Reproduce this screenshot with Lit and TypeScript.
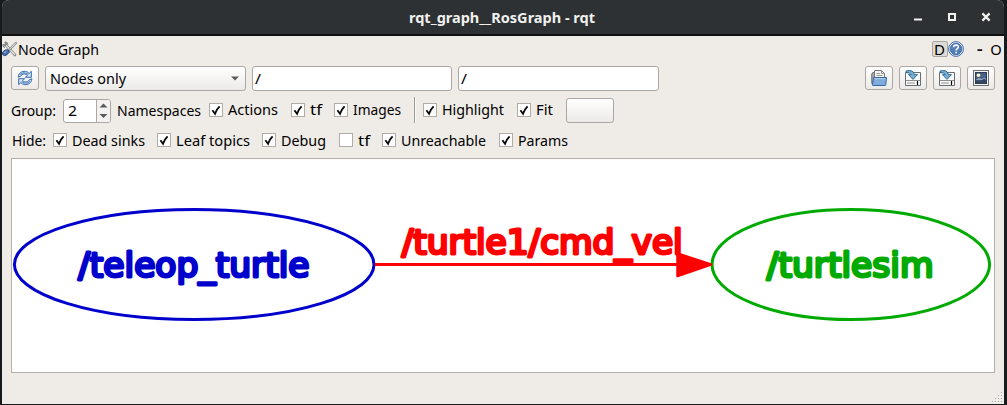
import { LitElement, html, svg, css } from "lit";
import { customElement, property } from "lit/decorators.js";

@customElement("ui-label")
class UiLabel extends LitElement {
  @property() text = "";
  @property({ type: Number }) width = 50;
  @property({ type: Number }) base = 15;
  static styles = css`
    :host { display: block; flex: none; height: 20px; }
    svg { display: block; overflow: visible; }
    text { font-family: "Noto Sans", "Open Sans", sans-serif; font-size: 14.5px; fill: #000; }
    :host([strong]) text { font-weight: 700; font-size: 14px; fill: #f0f0ee; }
  `;
  render() {
    return html`<svg width=${this.width} height="20"><text x="0" y=${this.base} textLength=${this.width} lengthAdjust="spacingAndGlyphs">${this.text}</text></svg>`;
  }
}

@customElement("ui-check")
class UiCheck extends LitElement {
  @property() text = "";
  @property({ type: Number }) width = 50;
  @property({ type: Number }) base = 15.1;
  @property({ type: Boolean }) on = false;
  static styles = css`
    :host { display: flex; flex: none; align-items: center; gap: 5px; height: 20px; }
    .box { box-sizing: border-box; width: 14px; height: 14px; border: 1px solid #b1aca6; background: #fff; }
    svg { display: block; }
  `;
  render() {
    return html`<div class="box">${this.on
        ? html`<svg width="12" height="12"><path d="M2.4 6.2 5 9.7Q6.4 5.5 9.6 2.4" fill="none" stroke="#0a0a0a" stroke-width="1.9"/></svg>`
        : null}</div><ui-label .text=${this.text} .width=${this.width} .base=${this.base}></ui-label>`;
  }
}

const refresh = svg`
  <g fill="#d5e5f7" stroke="#3567a5" stroke-width="1" stroke-linejoin="round">
    <path d="M1.2 7.2C1.4 3 5 .9 8.3 1.4 10 1.6 11.3 2.4 12.2 3.4L14.3 1.3V7.3H8.4L10.4 5.3C8.3 3.3 5 3.7 4 6Z"/>
    <path d="M14.8 8.8C14.6 13 11 15.1 7.7 14.6 6 14.4 4.7 13.6 3.8 12.6L1.7 14.7V8.7H7.6L5.6 10.7C7.7 12.7 11 12.3 12 10Z"/>
  </g>
  <path d="M2.8 4.7Q6.5 1 11.4 4.5M13.2 11.3Q9.5 15 4.6 11.5" fill="none" stroke="#5f91c9" stroke-width="1.2"/>`;

const open = svg`
  <path d="M.8 13.5V3.7L2 2.5H5V13.5Z" fill="#aaa" stroke="#666"/>
  <path d="M3.5 9V1Q3.5.5 4 .5H10.5L13.5 3.5V9Z" fill="#f4f4f3" stroke="#777"/>
  <path d="M10.5.5V3.5H13.5M5.5 3.5H9M5.5 5.5H11.5" fill="none" stroke="#999"/>
  <path d="M2.8 7.5H15.2Q15.6 7.5 15.5 8L14.8 14.7Q14.7 15.5 14 15.5H2Q1.2 15.5 1.4 14.7Z" fill="#7facdc" stroke="#3567a5"/>
  <path d="M3.5 8.7H14.2" stroke="#b7d2ef"/>`;

const save = svg`
  <path d="M.5 2.5H15.5V15.5H.5Z" fill="#fafafa" stroke="#666e70"/>
  <path d="M1 10.5H15" stroke="#8a8e8c"/>
  <path d="M2 13H10" stroke="#c3c5c2" stroke-width="2"/>
  <path d="M12.5 11V15" stroke="#000" stroke-width="1.2"/>
  <path d="M1.1.9Q8.4-.8 9.4 4.6H12.5L8 9.4 3.5 4.6H6.1Q5.5 2.4 1.1 2.6Z" fill="#77adcf" stroke="#28658e" stroke-width=".9"/>`;

const image = svg`
  <rect x=".5" y=".5" width="15" height="15" fill="#f4f4f2" stroke="#6a6e70"/>
  <rect x="2.5" y="2.5" width="11" height="11" fill="#466088" stroke="#303c50"/>
  <path d="M3 9.7 6 8 9 9 11.2 7.4 13 9V10H3Z" fill="#90a4bb"/>
  <path d="M3 10.5H9L11 8.5 13 10V13H3Z" fill="#33455f"/>
  <circle cx="5.5" cy="5.3" r="1.8" fill="#fcf7bb"/>`;

const tools = svg`
  <path d="M3.6 3.6 13 14" stroke="#858a88" stroke-width="2.7" stroke-linecap="round"/>
  <path d="M3.8 3.9 12.8 13.8" stroke="#e7e8e6" stroke-width="1.3"/>
  <path d="M2.8 1.1 4.3 3.1 3.3 4.5 1 3.6Q.6 5.8 3 6.4M2.8 1.1Q5.4.8 5.7 3.8" fill="none" stroke="#80847f" stroke-width="1.1"/>
  <path d="M6 9.5 12.2 2.5 14.2 1.2 14.7 1.8 13.5 3.8 7 10" fill="#e5e6e4" stroke="#858985" stroke-width="1"/>
  <path d="M5.4 8.7Q7.5 9.4 7.3 11.2L4.7 13.9Q2.3 15.4.8 13.7-.3 11.8 1.6 10.2 3.5 8.5 5.4 8.7Z" fill="#4b72ad" stroke="#213f70"/>
  <path d="M2.2 11.7 4.4 10.3" stroke="#a7c0e4"/>`;

const icon = (art: unknown) => html`<svg class="icon" width="16" height="16" viewBox="0 0 16 16">${art}</svg>`;

@customElement("app-root")
class AppRoot extends LitElement {
  static styles = css`
    :host { display: block; box-sizing: border-box; width: 1007px; height: 405px; background: #171b1e; padding: 0 3px 1px 2px; }
    .window { display: flex; flex-direction: column; height: 404px; background: #efebe7; border-radius: 7px 7px 0 0; overflow: hidden; }
    .title { box-sizing: border-box; flex: none; height: 36px; background: #2d3134; border-bottom: 2px solid #0e1011; display: grid; grid-template-columns: 407px 187px 1fr; align-items: center; }
    .controls { justify-self: end; padding-right: 1px; }
    .row { display: flex; align-items: center; flex: none; }
    .header { height: 26px; }
    .grow { flex: 1; }
    .dock { box-sizing: border-box; width: 16px; height: 16px; border: 1px solid #aaa6a1; border-radius: 2px; background: #dedad6; padding-left: 1px; display: flex; align-items: center; }
    .tool { height: 25px; margin-top: 4px; padding: 0 9px; align-items: flex-start; }
    .btn { box-sizing: border-box; width: 28px; height: 24px; border: 1px solid #aca7a2; border-radius: 3px; background: linear-gradient(#fff, #eceae8); display: flex; align-items: center; justify-content: center; flex: none; }
    .btn.blank { width: 48px; height: 25px; }
    .combo { box-sizing: border-box; width: 201px; height: 25px; border: 1px solid #aca7a2; border-radius: 3px; margin-left: 6px; padding: 0 6px 0 4px; background: linear-gradient(#fff, #eceae8); display: flex; align-items: center; justify-content: space-between; }
    .field { box-sizing: border-box; width: 200px; height: 25px; border: 1px solid #aca7a2; border-radius: 3px; margin-left: 6px; padding-left: 2px; background: #fff; display: flex; align-items: center; }
    .field.wide { width: 201px; }
    .right { display: flex; gap: 6px; margin-left: auto; }
    .options { height: 26px; margin-top: 6px; padding-left: 9px; }
    .spin { box-sizing: border-box; width: 48px; height: 24px; margin: 1px 6px 0 7px; border: 1px solid #aca7a2; border-radius: 3px; background: #fff; display: flex; align-items: center; overflow: hidden; padding-left: 4px; justify-content: space-between; }
    .steps { width: 13px; height: 22px; border-left: 1px solid #aca7a2; background: #f4f2f0; }
    .sep { width: 1px; height: 26px; background: #9d9994; border-right: 1px solid #f9f8f6; margin: 0 7px 0 13px; }
    .hide { height: 20px; margin-top: 7px; padding-left: 10px; }
    .g7 { margin-left: 7px; } .g8 { margin-left: 8px; } .g12 { margin-left: 12px; } .g13 { margin-left: 13px; }
    .canvas { box-sizing: border-box; width: 984px; height: 215px; flex: none; margin: 8px 0 0 9px; border: 1px solid #b4afaa; background: #fff; }
    .canvas svg { display: block; }
    .node { font-family: "DejaVu Sans", sans-serif; font-size: 34.5px; stroke-width: 3; stroke-linejoin: round; }
    .foot { flex: 1; display: flex; justify-content: flex-end; align-items: flex-end; }
    svg { display: block; flex: none; }
  `;
  check(text: string, width: number, gap: string, on = true, base = 15.1) {
    return html`<ui-check class=${gap} .text=${text} .width=${width} .on=${on} .base=${base}></ui-check>`;
  }
  render() {
    return html`<div class="window">
      <div class="title">
        <span></span>
        <ui-label strong .text=${"rqt_graph__RosGraph - rqt"} .width=${186} .base=${15.5}></ui-label>
        <svg class="controls" width="92" height="20" fill="none" stroke="#f2f2f0">
          <path d="M3 12.5H11" stroke-width="2"/>
          <rect x="38" y="7" width="6" height="6" stroke-width="2"/>
          <path d="M71.4 6.4 78.6 13.6M78.6 6.4 71.4 13.6" stroke-width="2.2"/>
        </svg>
      </div>
      <div class="row header">
        ${icon(tools)}<ui-label .text=${"Node Graph"} .width=${81} .base=${15.8}></ui-label>
        <span class="grow"></span>
        <div class="dock"><ui-label .text=${"D"} .width=${11} .base=${15.5}></ui-label></div>
        <svg width="16" height="16" viewBox="0 0 16 16">
          <circle cx="8" cy="8" r="7.4" fill="#fff" stroke="#3e68a4"/>
          <circle cx="8" cy="8" r="5.9" fill="#527eb8" stroke="#315b98" stroke-width=".7"/>
          <path d="M5.6 6.3Q5.6 4.1 8 4.1T10.3 6.1Q10.3 7.2 9 8 8.1 8.5 8.1 9.6M8.1 10.7V12.2" fill="none" stroke="#fff" stroke-width="1.6"/>
        </svg>
        <svg width="40" height="20"><path d="M13.5 11.2H18.2" stroke="#111" stroke-width="1.8"/>
          <text x="26.2" y="15.8" font-family="Noto Sans, sans-serif" font-size="14.5" textLength="11.5" lengthAdjust="spacingAndGlyphs">O</text></svg>
      </div>
      <div class="row tool">
        <div class="btn">${icon(refresh)}</div>
        <div class="combo"><ui-label .text=${"Nodes only"} .width=${76} .base=${15.4}></ui-label>
          <svg width="8" height="5"><path d="M0 .5H8L4 4.5Z" fill="#5c5a58"/></svg></div>
        <div class="field"><ui-label .text=${"/"} .width=${6} .base=${15.4}></ui-label></div>
        <div class="field wide"><ui-label .text=${"/"} .width=${6} .base=${15.4}></ui-label></div>
        <div class="right">
          <div class="btn">${icon(open)}</div><div class="btn">${icon(save)}</div>
          <div class="btn">${icon(save)}</div><div class="btn">${icon(image)}</div>
        </div>
      </div>
      <div class="row options">
        <ui-label .text=${"Group:"} .width=${45} .base=${15.6}></ui-label>
        <div class="spin"><ui-label .text=${"2"} .width=${9} .base=${15.2}></ui-label>
          <div class="steps"><svg width="13" height="22" fill="#5c5a58"><path d="M2.5 7.5H10.5L6.5 3.5ZM2.5 14H10.5L6.5 18Z"/></svg></div></div>
        <ui-label .text=${"Namespaces"} .width=${84} .base=${15.6}></ui-label>
        ${this.check("Actions", 50, "g8")}${this.check("tf", 12, "g13")}${this.check("Images", 48, "g12")}
        <div class="sep"></div>
        ${this.check("Highlight", 62, "")}${this.check("Fit", 17, "g13")}
        <div class="btn blank g13"></div>
      </div>
      <div class="row hide">
        <ui-label .text=${"Hide:"} .width=${34} .base=${16}></ui-label>
        ${this.check("Dead sinks", 73, "g7", true, 16)}${this.check("Leaf topics", 74, "g12", true, 16)}${this.check("Debug", 45, "g12", true, 16)}
        ${this.check("tf", 12, "g13", false, 16)}${this.check("Unreachable", 85, "g12", true, 16)}${this.check("Params", 50, "g13", true, 16)}
      </div>
      <div class="canvas">
        <svg width="982" height="213" viewBox="12 159 982 213">
          <g class="node" fill="#00c" stroke="#00c">
            <ellipse cx="194.2" cy="264.5" rx="179.8" ry="55" fill="none"/>
            <text x="78.2" y="277.2">/teleop_turtle</text>
          </g>
          <g class="node" fill="#0a0" stroke="#0a0">
            <ellipse cx="850.8" cy="264.5" rx="138.8" ry="55" fill="none"/>
            <text x="766.8" y="277.2">/turtlesim</text>
          </g>
          <g class="node" fill="#f00" stroke="#f00">
            <path d="M375 264.5H678"/>
            <path d="M677.5 253.5 711 264.5 677.5 276Z" stroke-width="2.5"/>
            <text x="401.7" y="253.5" textLength="281">/turtle1/cmd_vel</text>
          </g>
        </svg>
      </div>
      <div class="foot"><svg width="13" height="13" fill="#aaa6a2">
        ${[0, 1, 2, 3].map((r) => Array.from({ length: r + 1 }, (_, c) => svg`<rect x=${10 - c * 3} y=${1 + r * 3} width="1" height="1"/>`))}
      </svg></div>
    </div>`;
  }
}
